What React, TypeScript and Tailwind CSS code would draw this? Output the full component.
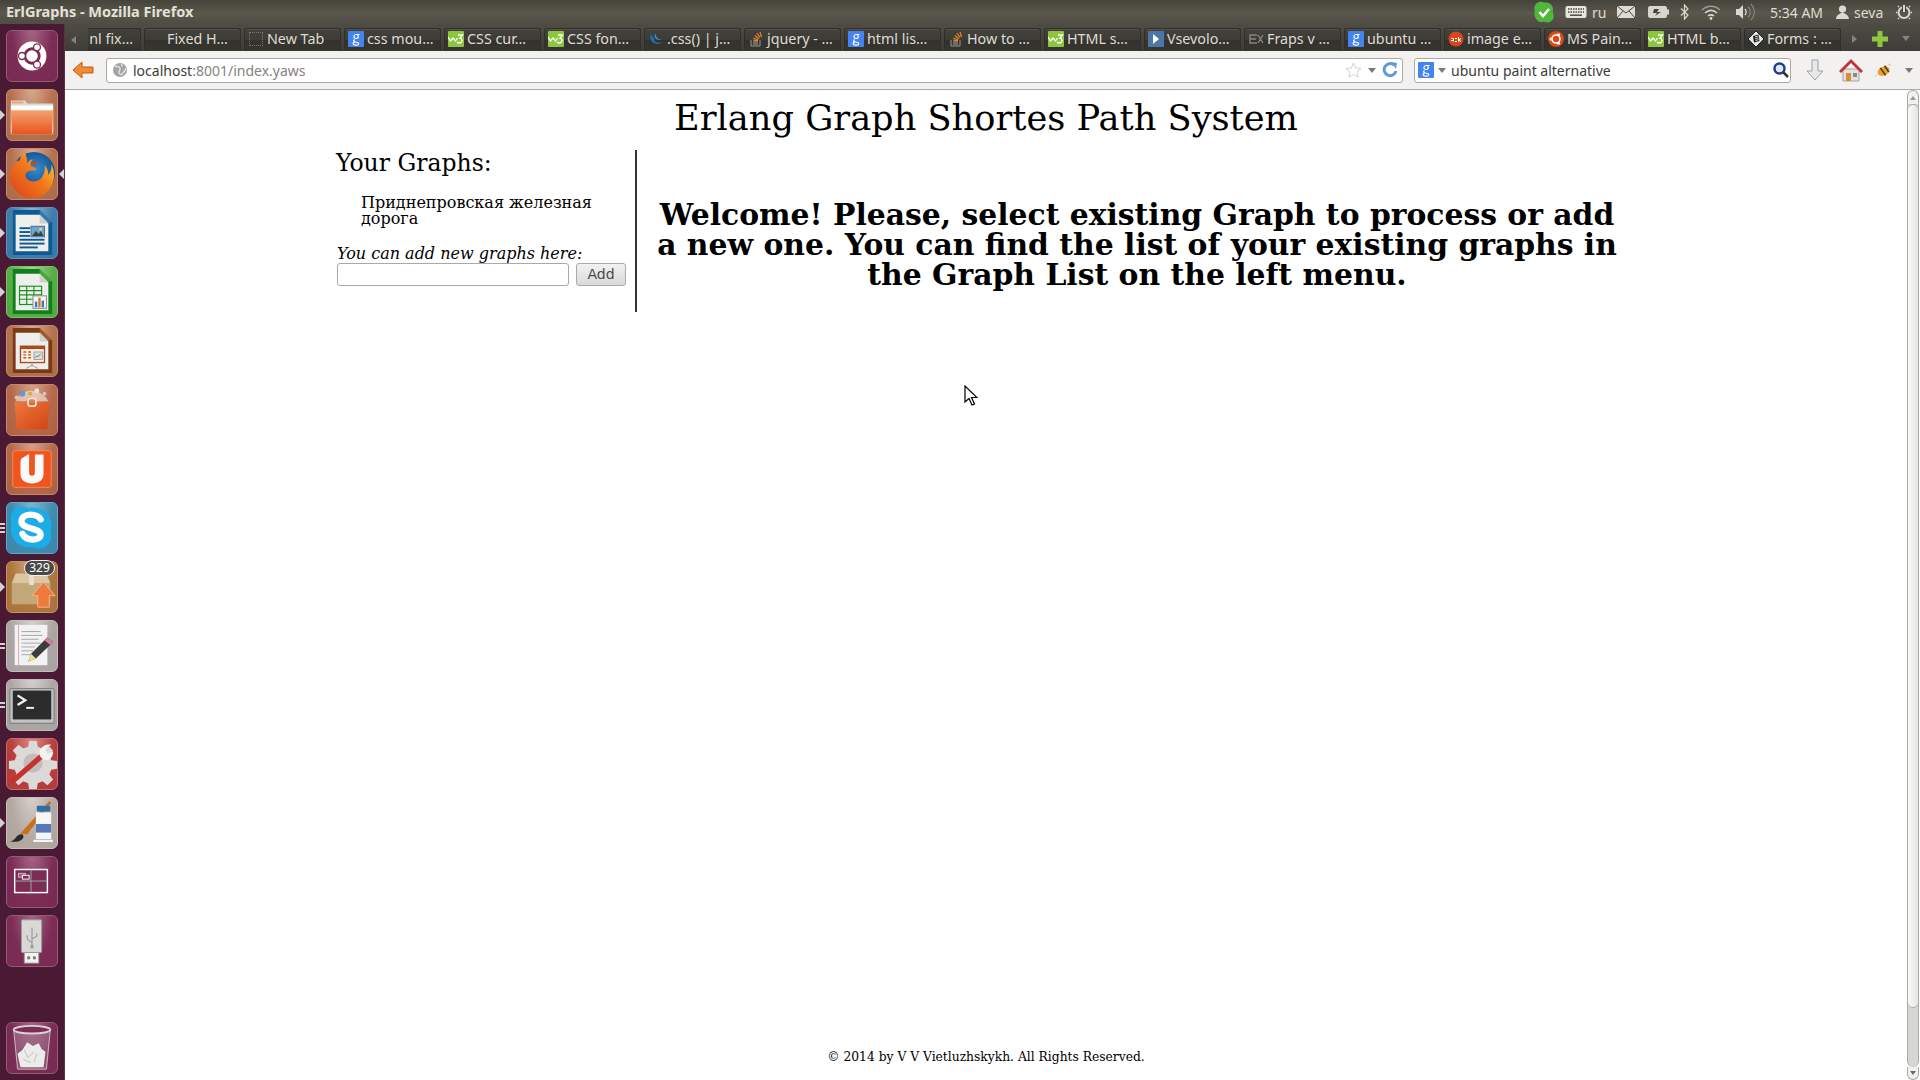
import React from "react";

const ui = "font-['Noto_Sans','Open_Sans',sans-serif]";
const serif = "font-['DejaVu_Serif',serif]";

function Gl() {
  return (
    <svg width="16" height="16" viewBox="0 0 16 16" className="shrink-0">
      <rect width="16" height="16" rx="1" fill="#4584ee" />
      <path d="M11.500 3.500H8C5.500 3.500 5 7.500 8 7.500s3-3.500.5-4M6.500 8.500c-1.500 1-1 2 1 2.500 2.500.5 3.500 1 3 2.200-.6 1.300-5 1.300-5.300-.4-.2-1 1-1.800 2-1.900" fill="none" stroke="#fff" strokeWidth="1.200" />
    </svg>
  );
}
function W3() {
  return (
    <svg width="16" height="16" viewBox="0 0 16 16" className="shrink-0">
      <rect width="16" height="16" rx="1" fill="#8cc63e" />
      <path d="M0 6l2.500 4 2.500-3 2.500 3 2-3M10 4h4.500l-2.500 3c2.500 0 3 5-1 5-1 0-1.500-.5-2-1" fill="none" stroke="#fff" strokeWidth="1.300" />
    </svg>
  );
}
function So() {
  return (
    <svg width="16" height="16" viewBox="0 0 16 16" className="shrink-0">
      <path d="M3 9v6h9V9" fill="none" stroke="#9a9a96" strokeWidth="1" />
      <path d="M5 13h5M5 11h5" stroke="#a9a6a0" strokeWidth="1" />
      <path d="M5 9l5 .8M5.500 7l4.800 2M7 4.500l4 3.200M9 2l3 4.500M12 1l1.500 5" stroke="#e8842c" strokeWidth="1.200" />
    </svg>
  );
}
function TabIcon({ k }: { k: string }) {
  if (k === "g") return <Gl />;
  if (k === "w") return <W3 />;
  if (k === "s") return <So />;
  if (k === "new")
    return <span className="w-[14px] h-[14px] border border-dotted border-[#77756e] shrink-0 mx-px" />;
  if (k === "jq")
    return (
      <svg width="16" height="16" viewBox="0 0 16 16" className="shrink-0">
        <path d="M3 2c-2 5 0 11 7 11 2 0 3.500-.8 4.500-2-3 1.500-8 1-8.500-3-.3-2.500 1-4 1-4-1.500 1-2 3-2 3S3 4 3 2z" fill="#1a6fb5" />
        <path d="M7 2c-1 3 0 7 5 7l2-.5C10 9 8 6 7 2z" fill="#3a97d8" />
      </svg>
    );
  if (k === "v")
    return (
      <svg width="16" height="16" viewBox="0 0 16 16" className="shrink-0">
        <rect width="16" height="16" rx="1" fill="#4c76a6" />
        <path d="M5 3l6 5-6 5z" fill="#fff" />
      </svg>
    );
  if (k === "ex")
    return (
      <svg width="16" height="16" viewBox="0 0 16 16" className="shrink-0">
        <path d="M9 4H2v8h7M2 8h6M10 4l5 8M15 4l-5 8" fill="none" stroke="#85847e" strokeWidth="1.400" />
      </svg>
    );
  if (k === "ask")
    return (
      <svg width="16" height="16" viewBox="0 0 16 16" className="shrink-0">
        <circle cx="8" cy="8" r="7.500" fill="#d8471b" />
        <path d="M3 9.500h2.500M3.500 7.500h2v3M7 7.500H9M7 10.500h2M10.500 6v4.500M13 7.500l-2.500 1.500 2.500 1.500" fill="none" stroke="#fff" strokeWidth="1" />
      </svg>
    );
  if (k === "u")
    return (
      <svg width="16" height="16" viewBox="0 0 16 16" className="shrink-0">
        <circle cx="8" cy="8" r="8" fill="#dd4814" />
        <circle cx="8" cy="8" r="4" fill="none" stroke="#fff" strokeWidth="1.600" />
        <circle cx="3" cy="8" r="1.500" fill="#fff" />
        <circle cx="10.500" cy="3.700" r="1.500" fill="#fff" />
        <circle cx="10.500" cy="12.300" r="1.500" fill="#fff" />
      </svg>
    );
  if (k === "f")
    return (
      <svg width="16" height="16" viewBox="0 0 16 16" className="shrink-0">
        <path d="M8 0l8 8-8 8-8-8z" fill="#e8e8e4" stroke="#222" strokeWidth="1" />
        <path d="M5 5l5.500-1.500 1 6.500-5.500 1.500z" fill="#222" />
        <path d="M7 6l3-1M7.300 7.800l3-1M7.600 9.600l3-1" stroke="#fff" strokeWidth=".8" />
      </svg>
    );
  return null;
}

const tabs = [
  ["new", "New Tab"],
  ["g", "css mou…"],
  ["w", "CSS cur…"],
  ["w", "CSS fon…"],
  ["jq", ".css() | j…"],
  ["s", "jquery - …"],
  ["g", "html lis…"],
  ["s", "How to …"],
  ["w", "HTML s…"],
  ["v", "Vsevolo…"],
  ["ex", "Fraps v …"],
  ["g", "ubuntu …"],
  ["ask", "image e…"],
  ["u", "MS Pain…"],
  ["w", "HTML b…"],
  ["f", "Forms : …"],
];

function Tab({ icon, label, pad = "pl-[3px]" }: { icon?: string; label: string; pad?: string }) {
  return (
    <div className={`w-[97px] ${pad} pb-[2px] shrink-0 h-[23px] rounded-t-[3px] border border-b-0 border-[#2f2e2a] bg-[linear-gradient(#42413b,#3d3c37_50%,#33322e_52%,#36352f)] shadow-[inset_0_1px_0_#55534b] flex items-center gap-[3px] overflow-hidden whitespace-nowrap text-[14.3px] text-[#dfdbd2] ${ui}`}>
      {icon && <TabIcon k={icon} />}
      <span>{label}</span>
    </div>
  );
}

const tile: Record<string, string> = {
  plum: "bg-[radial-gradient(ellipse_at_50%_-10%,#a86a88,#7c2c55_60%,#782a52)] border-[#96597a]",
  brown: "bg-[radial-gradient(ellipse_at_50%_-10%,#d8ad95,#b5724e_60%,#ad6a48)] border-[#c48c6d]",
  blue: "bg-[radial-gradient(ellipse_at_50%_-10%,#8fb9d5,#3f7eab_60%,#3a76a3)] border-[#5d96bd]",
  green: "bg-[radial-gradient(ellipse_at_50%_-10%,#a7d79a,#5aae48_60%,#52a641)] border-[#7cc26c]",
  orange: "bg-[radial-gradient(ellipse_at_50%_-10%,#d9a58b,#b6694a_60%,#ad6244)] border-[#c68770]",
  sky: "bg-[radial-gradient(ellipse_at_50%_-10%,#7fb8cf,#3e8eb1_60%,#3a87a9)] border-[#62a6c3]",
  tan: "bg-[radial-gradient(ellipse_at_50%_-10%,#d4ad86,#ae7840_60%,#a8723c)] border-[#c2955f]",
  gray: "bg-[radial-gradient(ellipse_at_50%_-10%,#d8d4d2,#aca6a5_60%,#a8a2a1)] border-[#c2bdbb]",
  red: "bg-[radial-gradient(ellipse_at_50%_-10%,#dc8f8c,#b8403f_60%,#b03a3a)] border-[#cb6c6a]",
  stone: "bg-[radial-gradient(ellipse_at_50%_-10%,#dbd3ce,#b3a8a2_60%,#aea39d)] border-[#c7beb9]",
};

function G({ children }: { children: React.ReactNode }) {
  return (
    <svg width="50" height="50" viewBox="0 0 52 52" className="overflow-visible">
      {children}
    </svg>
  );
}

function Doc({ dark, light, children }: { dark: string; light: string; children: React.ReactNode }) {
  return (
    <G>
      <path d="M6 2h28l13 13v34H6z" fill={dark} />
      <path d="M34 2l13 13H34z" fill={light} />
      <path d="M9 7h25l9 9v29H9z" fill="#eeeeec" />
      <path d="M34 7l9 9h-9z" fill="#cfcfcc" />
      {children}
    </G>
  );
}

const icons: Record<string, React.ReactNode> = {
  dash: (
    <G>
      <g transform="translate(11 11)">
        <circle cx="15" cy="15" r="15" fill="#fff" />
        <circle cx="15" cy="15" r="7.500" fill="none" stroke="#7c2c55" strokeWidth="3" />
        <circle cx="4.500" cy="15" r="3.600" fill="#fff" stroke="#7c2c55" strokeWidth="1.400" />
        <circle cx="20.200" cy="6" r="3.600" fill="#fff" stroke="#7c2c55" strokeWidth="1.400" />
        <circle cx="20.200" cy="24" r="3.600" fill="#fff" stroke="#7c2c55" strokeWidth="1.400" />
      </g>
    </G>
  ),
  files: (
    <G>
      <defs>
        <linearGradient id="fo" x1="0" y1="0" x2="0" y2="1">
          <stop offset="0" stopColor="#f5a26f" />
          <stop offset="1" stopColor="#e9541d" />
        </linearGradient>
      </defs>
      <path d="M4 11h15l2 3h27v32H4z" fill="#d9d9d6" />
      <path d="M5 12h12v2H5z" fill="#f19f6b" />
      <path d="M4 16h44v28H4z" fill="#fff" />
      <path d="M4 21h44l-1 25H5z" fill="url(#fo)" />
    </G>
  ),
  firefox: (
    <G>
      <defs>
        <radialGradient id="ffb" cx=".55" cy=".4" r=".6">
          <stop offset="0" stopColor="#2f8fd0" />
          <stop offset="1" stopColor="#103a80" />
        </radialGradient>
        <linearGradient id="ffo" x1="1" y1="0" x2="0" y2="1">
          <stop offset="0" stopColor="#fbd22e" />
          <stop offset=".5" stopColor="#f2741c" />
          <stop offset="1" stopColor="#d9401a" />
        </linearGradient>
      </defs>
      <circle cx="28" cy="25" r="22" fill="url(#ffb)" />
      <path d="M19 3c-3 2-5 5-6 9-2 0-4 1-5 3-4 5-6 11-5 17 2 11 13 20 24 19 13-1 22-12 22-24 0-4-1-8-3-11 1 5-1 8-3 11 0-5-2-8-4-10 1 6-1 11-4 14-4 4-12 4-15-1-2-3 0-6 3-7l7-1c1-2-2-3-5-4-1-3 0-5 2-7-3 0-5 2-6 4 0-4-1-8-2-12z" fill="url(#ffo)" />
      <path d="M24 14l6-1 2 2-3 2z" fill="#d9401a" />
    </G>
  ),
  writer: (
    <Doc dark="#0e5a92" light="#2f7bb0">
      <rect x="13" y="20" width="11" height="2" fill="#0e5a92" />
      <rect x="13" y="24" width="11" height="2" fill="#0e5a92" />
      <rect x="13" y="28" width="11" height="2" fill="#0e5a92" />
      <rect x="13" y="32" width="26" height="2" fill="#0e5a92" />
      <rect x="13" y="36" width="26" height="2" fill="#0e5a92" />
      <rect x="13" y="40" width="19" height="2" fill="#0e5a92" />
      <rect x="25" y="19" width="14" height="11" fill="#6ea7ce" stroke="#3a6f96" />
      <path d="M26 29l4-5 3 3 2-3 3 5z" fill="#3b3f48" />
      <circle cx="35" cy="22" r="1.500" fill="#f5d547" />
    </Doc>
  ),
  calc: (
    <Doc dark="#11801c" light="#46a83a">
      <g stroke="#18921f" strokeWidth="1.200" fill="none">
        <rect x="13" y="20" width="23" height="19" />
        <path d="M13 24.500h23M13 29h23M13 33.500h23M20.500 20v19M28 20v19" />
      </g>
      <rect x="27" y="30" width="14" height="13" fill="#f4f4f2" stroke="#8b8b88" />
      <rect x="29" y="36" width="2.500" height="6" fill="#2f80c8" />
      <rect x="32.500" y="32" width="2.500" height="10" fill="#e7742a" />
      <rect x="36" y="35" width="2.500" height="7" fill="#2f80c8" />
    </Doc>
  ),
  impress: (
    <Doc dark="#7b3a14" light="#a25a2c">
      <rect x="14" y="21" width="25" height="17" fill="#f5efe8" stroke="#a84a1a" strokeWidth="1.400" />
      <rect x="14" y="21" width="25" height="3" fill="#a84a1a" />
      <path d="M17 27h3M17 30h3M17 33h3M22 27h3M22 30h3M22 33h3" stroke="#c4581f" strokeWidth="1.500" />
      <rect x="28" y="27" width="9" height="8" fill="#ddd" stroke="#777" strokeWidth=".6" />
      <path d="M29 33l2-2 1 1 3-3" stroke="#3a9a3a" fill="none" />
      <path d="M26 38v3l-6 3M26 41l6 3" stroke="#999" fill="none" />
    </Doc>
  ),
  software: (
    <G>
      <defs>
        <linearGradient id="bag" x1="0" y1="0" x2="1" y2="1">
          <stop offset="0" stopColor="#f0783c" />
          <stop offset="1" stopColor="#cf4414" />
        </linearGradient>
      </defs>
      <path d="M8 18h36l-2 28H10z" fill="url(#bag)" />
      <rect x="22" y="14" width="8" height="8" rx="2" fill="none" stroke="#f9e1d3" strokeWidth="1.800" />
      <path d="M9 17c3-7 9-11 16-11s15 4 18 11H30l-2-4h-6l-2 4z" fill="#f7e8dc" opacity=".6" />
      <circle cx="16" cy="9" r="3" fill="#5e9ccf" />
      <circle cx="31" cy="6" r="2.500" fill="#e9e4df" />
      <circle cx="24" cy="9" r="2" fill="#d7a34a" />
      <circle cx="39" cy="9" r="2" fill="#c8c8d0" />
      <circle cx="10" cy="13" r="2" fill="#e2c7a6" />
    </G>
  ),
  one: (
    <G>
      <rect x="6" y="7" width="40" height="38" rx="2" fill="#f0551c" stroke="#f58a5f" />
      <path d="M15 15l7-4h1v19c0 2 1 3 3 3s3-1 3-3V11h9v20c0 7-5 10-12 10s-12-3-12-10V18z" fill="#fafafa" />
    </G>
  ),
  skype: (
    <G>
      <path d="M15 4c4 0 6 2 9 1 11-2 23 6 22 20 0 3-1 4 0 7 1 9-5 15-13 15-4 0-5-2-9-1C13 47 4 38 4 26c0-3 1-4 0-7C3 10 8 4 15 4z" fill="#1cade8" />
      <path d="M35 17c-2-4-7-5-11-5-5 0-9 3-9 7 0 9 20 6 20 14 0 3-4 5-8 5-6 0-9-2-11-6" fill="none" stroke="#fff" strokeWidth="6.500" strokeLinecap="round" />
    </G>
  ),
  archive: (
    <G>
      <path d="M5 22h40v22H5z" fill="#c4a67b" />
      <path d="M5 22l4-10h32l4 10z" fill="#dcc6a3" />
      <rect x="23" y="12" width="5" height="12" fill="#eadfca" />
      <path d="M38 21l12 14h-6v12H32V35h-6z" fill="#ee7a3c" stroke="#f4b48f" />
    </G>
  ),
  gedit: (
    <G>
      <rect x="8" y="4" width="34" height="42" fill="#f2f1f3" />
      <path d="M12 4v42" stroke="#e6a8a8" />
      <path d="M15 11h20M15 15h22M15 19h18M15 23h20M15 27h14M15 31h12M15 35h10" stroke="#a7a5a8" strokeWidth="1" />
      <path d="M42 17l6 5-18 17-8 3 3-8z" fill="#3c3c3c" />
      <path d="M42 17l6 5-3 3-6-5z" fill="#db7aa5" />
      <path d="M22 42l3-8 5 5z" fill="#f2e27c" />
    </G>
  ),
  term: (
    <G>
      <rect x="3" y="9" width="46" height="36" rx="1" fill="#c2c2c0" stroke="#777" />
      <rect x="6" y="11" width="40" height="30" fill="#2c2c2c" />
      <path d="M11 16l8 5-8 5" fill="none" stroke="#f2f2f2" strokeWidth="2.400" />
      <rect x="20" y="28" width="8" height="2" fill="#f2f2f2" />
    </G>
  ),
  settings: (
    <G>
      <path d="M23 2h8l1 6 5 2 5-4 6 6-4 5 2 5 6 1v8l-6 1-2 5 4 5-6 6-5-4-5 2-1 6h-8l-1-6-5-2-5 4-6-6 4-5-2-5-6-1v-8l6-1 2-5-4-5 6-6 5 4 5-2z" fill="#dcdad9" />
      <circle cx="27" cy="25" r="10" fill="#c4bcbb" />
      <path d="M7 43L37 17" stroke="#c5332a" strokeWidth="5.500" strokeLinecap="round" />
      <path d="M35 19c-4-6 2-15 11-13l-6 5 2 4 6-2c0 8-7 12-13 6z" fill="#f2f2f0" />
    </G>
  ),
  paint: (
    <G>
      <path d="M3 45c3 0 5-2 7-5 3-3 6-3 7-1 1 4-4 8-14 6z" fill="#2d2a28" />
      <path d="M14 37L44 3l2 2-25 33z" fill="#c8701f" />
      <rect x="31" y="8" width="14" height="6" rx="1" fill="#2b6fa8" />
      <path d="M30 15h16v28H30z" fill="#f5f5f3" />
      <path d="M30 27h16v9H30z" fill="#5578b8" />
      <rect x="27" y="43" width="21" height="3" fill="#f5f5f3" stroke="#999" strokeWidth=".5" />
    </G>
  ),
  work: (
    <G>
      <rect x="8" y="13" width="34" height="24" fill="#7c2c55" stroke="#fff" strokeWidth="1.500" />
      <path d="M8 25h34M25 13v24" stroke="#8fae9a" strokeWidth="1" />
      <rect x="12" y="17" width="7" height="4" fill="#9c5b7a" stroke="#bcbcbc" />
      <rect x="16" y="19" width="7" height="4" fill="#7c2c55" stroke="#fff" />
    </G>
  ),
  usb: (
    <G>
      <rect x="15" y="4" width="21" height="34" rx="1" fill="#d8d8d6" stroke="#9a9a98" />
      <rect x="18" y="38" width="15" height="11" fill="#f2f2f0" stroke="#999" />
      <rect x="21" y="42" width="3" height="3" fill="#777" />
      <rect x="27" y="42" width="3" height="3" fill="#777" />
      <path d="M26 12v19M26 28l-5-4v-4M26 24l5-3v-3" fill="none" stroke="#9a9a98" strokeWidth="1.200" />
      <circle cx="26" cy="32" r="1.800" fill="#9a9a98" />
    </G>
  ),
  trash: (
    <G>
      <path d="M7 7l4 41h30l4-41z" fill="#b58ea4" fillOpacity=".4" stroke="#c9bcc3" />
      <path d="M14 46l-3-14 5-4 5-8 6 4 6-3 3 6 4 3-2 16z" fill="#ececea" />
      <path d="M18 28l4 8 6-6M31 32l-3 9M17 38l8 3" stroke="#bdbdbb" fill="none" />
      <ellipse cx="26" cy="7" rx="19" ry="4" fill="#7c2c55" stroke="#d5d5d3" strokeWidth="2" />
    </G>
  ),
};

const launcher: [string, string, number, boolean?][] = [
  ["dash", "plum", 0],
  ["files", "brown", 1],
  ["firefox", "brown", 1, true],
  ["writer", "blue", 1],
  ["calc", "green", 1],
  ["impress", "brown", 0],
  ["software", "orange", 0],
  ["one", "orange", 0],
  ["skype", "sky", 3],
  ["archive", "tan", 1],
  ["gedit", "gray", 2],
  ["term", "gray", 2],
  ["settings", "red", 0],
  ["paint", "stone", 1],
  ["work", "plum", 0],
  ["usb", "plum", 0],
];

function LauncherItem({ name, color, pips, active }: { name: string; color: string; pips: number; active?: boolean }) {
  return (
    <div className="relative w-[65px] h-[52px] flex justify-center pr-[1px] shrink-0">
      {pips === 1 && (
        <span className="absolute left-0 top-[21px] w-0 h-0 border-y-[5px] border-y-transparent border-l-[5px] border-l-[#d5d0d2]" />
      )}
      {pips > 1 && (
        <div className="absolute left-0 top-0 bottom-0 flex flex-col justify-center gap-[2px]">
          {Array.from({ length: pips }).map((_, i) => (
            <span key={i} className="block w-[5px] h-[2px] bg-[#d5d0d2]" />
          ))}
        </div>
      )}
      {active && (
        <span className="absolute right-[1px] top-[21px] w-0 h-0 border-y-[5px] border-y-transparent border-r-[5px] border-r-[#d5d0d2]" />
      )}
      <div className={`relative w-[52px] h-[52px] rounded-[6px] border ${tile[color]} flex items-center justify-center`}>
        {icons[name]}
        {name === "archive" && (
          <span className={`absolute right-[2px] top-[-2px] w-[31px] h-[16px] rounded-full bg-[#4a4a4a] border-[1.5px] border-[#f0f0f0] flex items-center justify-center text-[12px] leading-none text-white ${ui}`}>
            329
          </span>
        )}
      </div>
    </div>
  );
}

function Tray() {
  const stroke = "#dcd8cf";
  return (
    <div className={`flex items-center h-[24px] text-[14px] text-[#dfdbd2] ${ui}`}>
      <svg width="22" height="24" viewBox="0 0 22 24" className="mr-[10px]">
        <path d="M6 2c3-1 5 .5 7 .5 3 0 7 2 7 7 0 2-.5 3 .5 5 1 4-2 8-6 8-2 0-3-1-5-.5-4 .5-8-3-8-8 0-2 .5-3 0-5C1 6 3 3 6 2z" fill="#4fb83c" />
        <path d="M6.500 12l3.500 4 6-7" fill="none" stroke="#fff" strokeWidth="2.600" />
      </svg>
      <svg width="22" height="14" viewBox="0 0 22 14">
        <rect x=".5" y="1" width="21" height="12" rx="2" fill="#e8e5de" />
        <path d="M3 4h16M3 7h16" stroke="#45433d" strokeWidth="1.400" strokeDasharray="1.500 1" />
        <rect x="5" y="9.500" width="12" height="1.400" fill="#45433d" />
      </svg>
      <span className="ml-[5px] w-[14px]">ru</span>
      <svg width="18" height="14" viewBox="0 0 18 14" className="ml-[11px]">
        <rect x="0" y="1" width="18" height="12" fill="#dedbd3" />
        <path d="M0 1l9 7 9-7M0 13l6-7M18 13l-6-7" fill="none" stroke="#45433d" />
      </svg>
      <svg width="21" height="12" viewBox="0 0 21 12" className="ml-[13px]">
        <rect x=".5" y=".5" width="18" height="11" rx="1.500" fill="#d8d5cd" stroke="#d8d5cd" />
        <rect x="19" y="3.500" width="2" height="5" fill="#d8d5cd" />
        <path d="M6 3h5L9 6h4l-6 4 2-3H5z" fill="#45433d" />
      </svg>
      <svg width="9" height="16" viewBox="0 0 9 16" className="ml-[11px]">
        <path d="M1 4.500l7 6.500-3.500 4V1L8 5 1 11.500" fill="none" stroke={stroke} strokeWidth="1.200" />
      </svg>
      <svg width="20" height="15" viewBox="0 0 20 15" className="ml-[12px]">
        <path d="M1 5c5-5 13-5 18 0" fill="none" stroke="#9c9a92" strokeWidth="1.500" />
        <path d="M4 8c4-3.500 8-3.500 12 0M7 11c2-1.500 4-1.500 6 0" fill="none" stroke={stroke} strokeWidth="1.500" />
        <circle cx="10" cy="13.500" r="1.400" fill={stroke} />
      </svg>
      <svg width="20" height="18" viewBox="0 0 20 18" className="ml-[14px]">
        <path d="M1 6h3l4-4v14l-4-4H1z" fill={stroke} />
        <path d="M10 6c1.500 2 1.500 4 0 6" fill="none" stroke={stroke} strokeWidth="1.300" />
        <path d="M13 3.500c3 3.500 3 7.500 0 11M16 1c4.500 5 4.500 11 0 16" fill="none" stroke="#85837b" strokeWidth="1.300" />
      </svg>
      <span className="ml-[15px] w-[53px] whitespace-nowrap">5:34 AM</span>
      <svg width="13" height="15" viewBox="0 0 13 15" className="ml-[13px]">
        <circle cx="6.500" cy="4" r="3.600" fill={stroke} />
        <path d="M6.500 7C4 9 0 10 0 14h13c0-4-4-5-6.500-7z" fill={stroke} />
      </svg>
      <span className="ml-[5px] w-[29px]">seva</span>
      <svg width="16" height="16" viewBox="0 0 16 16" className="ml-[13px] mr-[8px]">
        <circle cx="8" cy="8.500" r="5.500" fill="none" stroke={stroke} strokeWidth="2" />
        <path d="M8 1v7" stroke="#45433d" strokeWidth="4" />
        <path d="M8 1v7" stroke={stroke} strokeWidth="2" />
        <path d="M1 8.500H0M16 8.500h-1M3 3l-1-1M14 2l-1 1M3 14l-1 1M14 15l-1-1" stroke={stroke} strokeWidth="1.600" />
      </svg>
    </div>
  );
}

export default function App() {
  return (
    <div className={`w-[1920px] h-[1080px] relative overflow-hidden flex flex-col bg-white ${ui}`}>
      <header className="h-[24px] shrink-0 flex items-center justify-between bg-[linear-gradient(#45443c,#5a584c_55%,#4e4c43)] pl-[6px]">
        <span className={`text-[14.5px] font-bold text-[#e4e1d8] ${ui}`}>ErlGraphs - Mozilla Firefox</span>
        <Tray />
      </header>
      <div className="flex flex-1 min-h-0">
        <aside className="w-[65px] shrink-0 h-full bg-[#4a1a34] border-r border-[#5d3049] flex flex-col pt-[6px] pb-[6px] gap-[7px]">
          {launcher.map(([n, c, p, a]) => (
            <LauncherItem key={n} name={n} color={c} pips={p} active={a} />
          ))}
          <div className="mt-auto">
            <LauncherItem name="trash" color="plum" pips={0} />
          </div>
        </aside>
        <main className="flex-1 min-w-0 flex flex-col">
          <div className="h-[27px] shrink-0 bg-[linear-gradient(#4e4c43,#3d3c36)] flex items-end relative">
            <div className="w-[23px] h-[23px] shrink-0 flex items-center justify-center pr-[6px]">
              <span className="w-0 h-0 border-y-[4px] border-y-transparent border-r-[5px] border-r-[#85837b]" />
            </div>
            <div className="w-[53px] h-[23px] pb-[2px] shrink-0 rounded-tr-[3px] border border-b-0 border-l-0 border-[#2f2e2a] bg-[linear-gradient(#42413b,#33322e)] overflow-hidden whitespace-nowrap flex items-center justify-end pr-[7px] text-[14.3px] text-[#dfdbd2]">
              nl fix…
            </div>
            <div className="w-[3px] shrink-0" />
            <div className="flex gap-[3px]">
              <Tab label="Fixed H…" pad="pl-[22px]" />
              {tabs.map(([i, l], idx) => (
                <Tab key={idx} icon={i} label={l} />
              ))}
            </div>
            <div className="flex-1 h-[23px] flex items-center pb-[2px]">
              <span className="ml-[11px] w-0 h-0 border-y-[4px] border-y-transparent border-l-[5px] border-l-[#85837b]" />
              <svg width="16" height="16" viewBox="0 0 16 16" className="ml-[15px]">
                <path d="M5.500 0h5v5.500H16v5h-5.500V16h-5v-5.500H0v-5h5.500z" fill="#8ec63f" />
              </svg>
              <span className="ml-[14px] w-0 h-0 border-x-[4px] border-x-transparent border-t-[5px] border-t-[#85837b]" />
            </div>
          </div>
          <nav className="h-[39px] shrink-0 bg-[#f2f1ef] border-b border-[#a9a9a5] flex items-center pl-[7px]">
            <svg width="22" height="18" viewBox="0 0 22 18">
              <path d="M10 1L1 9l9 8v-5h11V6H10z" fill="#ef8b33" stroke="#c15c12" />
            </svg>
            <div className="ml-[12px] w-[1297px] h-[25px] bg-white border border-[#a9a9a5] rounded-[3px] flex items-center text-[14px] pl-[5px] pr-[4px]">
              <svg width="16" height="16" viewBox="0 0 16 16" className="shrink-0">
                <circle cx="8" cy="8" r="7" fill="#a3a3a1" />
                <path d="M3 4c2 1 4 0 5 2s-2 3-1 5 3 2 4 0 3-3 3-5M10 2c-1 1 0 2 1 2" fill="none" stroke="#e0e0de" strokeWidth="1.500" />
              </svg>
              <span className="ml-[5px] text-[#3c3b37]">localhost</span>
              <span className="text-[#85837f]">:8001/index.yaws</span>
              <svg width="17" height="16" viewBox="0 0 17 16" className="ml-auto">
                <path d="M8.500 1l2.200 5 5.300.5-4 3.500 1.200 5.200-4.700-2.700-4.700 2.700L5 10 1 6.500 6.300 6z" fill="#fff" stroke="#d0d0ce" />
              </svg>
              <span className="ml-[6px] w-0 h-0 border-x-[4px] border-x-transparent border-t-[5px] border-t-[#7a7a78]" />
              <svg width="16" height="16" viewBox="0 0 16 16" className="ml-[6px]">
                <path d="M14 9a6 6 0 1 1-2-6" fill="none" stroke="#5f9bd1" strokeWidth="3" />
                <path d="M9 0l6 1-1 6z" fill="#5f9bd1" />
              </svg>
            </div>
            <div className="ml-[11px] w-[377px] h-[25px] bg-white border border-[#a9a9a5] rounded-[3px] flex items-center text-[14px] text-[#3c3b37] pl-[3px]">
              <Gl />
              <span className="ml-[4px] w-0 h-0 border-x-[4px] border-x-transparent border-t-[5px] border-t-[#7a7a78]" />
              <span className="ml-[5px]">ubuntu paint alternative</span>
              <svg width="18" height="18" viewBox="0 0 18 18" className="ml-auto">
                <circle cx="7.500" cy="7.500" r="5" fill="#dfe8f5" stroke="#1f3f8c" strokeWidth="2.500" />
                <path d="M11 11l5 5" stroke="#333" strokeWidth="2.500" />
              </svg>
            </div>
            <svg width="18" height="22" viewBox="0 0 18 22" className="ml-[15px]">
              <path d="M6 1h6v11h5l-8 9-8-9h5z" fill="#e6e8ea" stroke="#9da1a5" />
            </svg>
            <svg width="24" height="24" viewBox="0 0 24 24" className="ml-[15px]">
              <path d="M4 11h16v12H4z" fill="#e2e2e0" stroke="#a3a3a1" />
              <path d="M12 1L0 13l2 2L12 5l10 10 2-2z" fill="#c0353b" />
              <rect x="7" y="15" width="5" height="8" fill="#dc8f2c" />
              <rect x="14" y="15" width="4" height="4" fill="#8a8a88" />
            </svg>
            <svg width="17" height="16" viewBox="0 0 16 14" className="ml-[12px]">
              <ellipse cx="8" cy="8" rx="6" ry="4" fill="#e8a12c" transform="rotate(-25 8 8)" />
              <path d="M5 5l5 7M9 3l4 6" stroke="#5a3a14" strokeWidth="1.500" />
              <path d="M12 1l3 2M2 12l-2 1" stroke="#c9c9c9" />
            </svg>
            <span className="ml-[13px] w-0 h-0 border-x-[4px] border-x-transparent border-t-[5px] border-t-[#7a7a78]" />
          </nav>
          <div className="flex-1 min-h-0 flex">
            <div className={`flex-1 min-w-0 flex flex-col items-center text-black ${serif}`}>
              <h1 className="mt-[9px] h-[37px] leading-[37px] text-[35.2px] font-normal whitespace-nowrap">Erlang Graph Shortes Path System</h1>
              <div className="mt-[14px] w-[1302px] h-[162px] flex shrink-0">
                <div className="w-[302px] h-full border-r-2 border-[#333] pl-[1px] shrink-0">
                  <h2 className="text-[23.5px] leading-[28px] font-normal mt-[-1px]">Your Graphs:</h2>
                  <p className="mt-[18px] ml-[25px] text-[16px] leading-[16px] w-[250px]">Приднепровская железная дорога</p>
                  <p className="mt-[18px] ml-[1px] italic text-[16px] leading-[18px] whitespace-nowrap">You can add new graphs here:</p>
                  <div className="flex gap-[7px] ml-[1px]">
                    <div className="w-[232px] h-[23px] rounded-[3px] border border-[#a9a9a9] bg-white" />
                    <div className="w-[50px] h-[23px] rounded-[3px] border border-[#a9a9a9] bg-[linear-gradient(#f2f2f2,#d9d9d9)] flex items-center justify-center text-[14px] text-[#4a4a4a] font-['DejaVu_Sans',sans-serif]">Add</div>
                  </div>
                </div>
                <div className="flex-1 min-w-0 px-[15px] pt-[50px] text-center text-[29.8px] leading-[30px] font-bold">
                  Welcome! Please, select existing Graph to process or add a new one. You can find the list of your existing graphs in the Graph List on the left menu.
                </div>
              </div>
              <footer className="mt-auto mb-[15px] text-[12.3px] leading-[16px] whitespace-nowrap">© 2014 by V V Vietluzhskykh. All Rights Reserved.</footer>
            </div>
            <div className="w-[12px] mr-[1px] shrink-0 flex flex-col items-center">
              <div className="w-full h-[14px] rounded-t-full border border-b-0 border-[#a9a9a5] bg-[#f2f1ef] flex items-center justify-center">
                <span className="w-0 h-0 border-x-[3px] border-x-transparent border-b-[4px] border-b-[#9a9a98]" />
              </div>
              <div className="w-full flex-1 min-h-0 flex flex-col rounded-b-full border-x border-[#a9a9a5] bg-[#d8d6d3]">
                <div className="h-[904px] shrink-0 rounded-t-[6px] rounded-b-[6px] border-y border-[#a9a9a5] bg-[linear-gradient(90deg,#fafaf9,#e6e5e2)]" />
              </div>
              <div className="w-full h-[13px] rounded-b-full border border-t-0 border-[#a9a9a5] bg-[#f2f1ef] flex items-center justify-center">
                <span className="w-0 h-0 border-x-[3px] border-x-transparent border-t-[4px] border-t-[#6a6a68]" />
              </div>
            </div>
          </div>
        </main>
      </div>
      <svg width="14" height="21" viewBox="0 0 14 21" className="absolute left-[964px] top-[385px]">
        <path d="M1 1v16l4-3.500 3 6.500 2.500-1-3-6.500H13z" fill="#fff" stroke="#000" strokeWidth="1.200" />
      </svg>
    </div>
  );
}
